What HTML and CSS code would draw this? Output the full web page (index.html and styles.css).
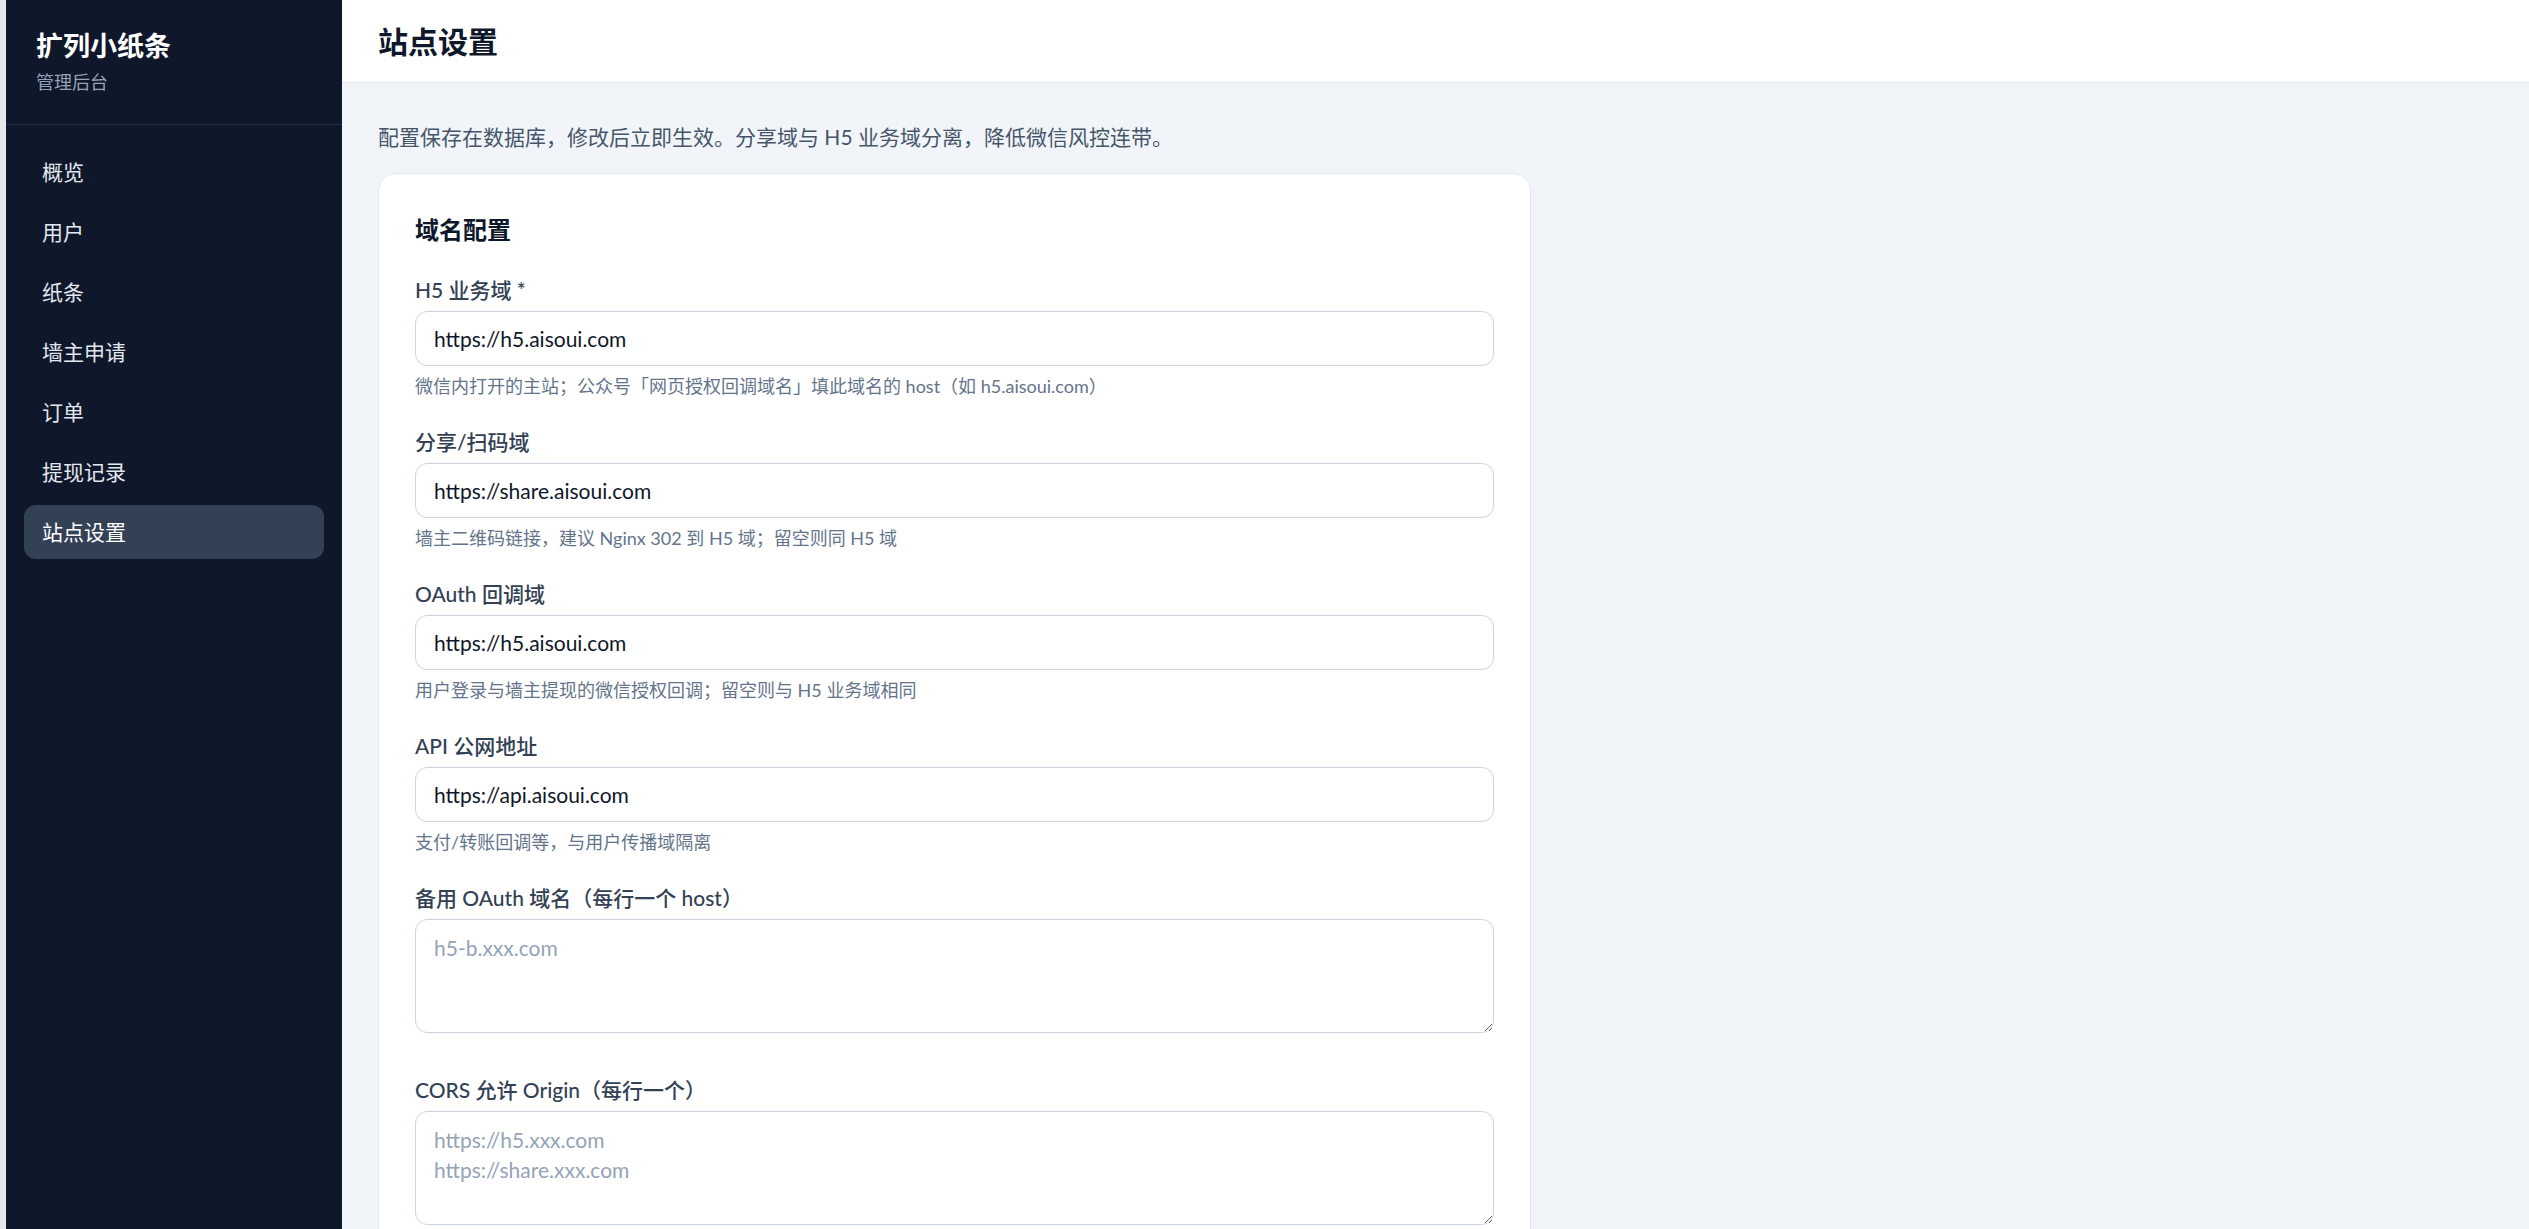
FILE: index.html
```html
<!DOCTYPE html>
<html lang="zh-CN">
<head>
    <meta charset="UTF-8">
    <meta name="viewport" content="width=device-width, initial-scale=1.0">
    <title>站点设置 - 扩列小纸条管理后台</title>
    <link rel="stylesheet" href="styles.css">
</head>
<body>
    <div class="layout">
        <aside class="sidebar">
            <div class="brand">
                <div class="brand-name">扩列小纸条</div>
                <div class="brand-sub">管理后台</div>
            </div>
            <nav class="nav">
                <a href="#" class="nav-item">概览</a>
                <a href="#" class="nav-item">用户</a>
                <a href="#" class="nav-item">纸条</a>
                <a href="#" class="nav-item">墙主申请</a>
                <a href="#" class="nav-item">订单</a>
                <a href="#" class="nav-item">提现记录</a>
                <a href="#" class="nav-item active">站点设置</a>
            </nav>
        </aside>

        <div class="main">
            <header class="topbar">
                <h1>站点设置</h1>
            </header>

            <div class="content">
                <p class="intro">配置保存在数据库，修改后立即生效。分享域与 H5 业务域分离，降低微信风控连带。</p>

                <section class="card">
                    <h2>域名配置</h2>

                    <div class="field">
                        <label for="h5-domain">H5 业务域 *</label>
                        <input id="h5-domain" type="text" value="https://h5.aisoui.com">
                        <div class="hint">微信内打开的主站；公众号「网页授权回调域名」填此域名的 host（如 h5.aisoui.com）</div>
                    </div>

                    <div class="field">
                        <label for="share-domain">分享/扫码域</label>
                        <input id="share-domain" type="text" value="https://share.aisoui.com">
                        <div class="hint">墙主二维码链接，建议 Nginx 302 到 H5 域；留空则同 H5 域</div>
                    </div>

                    <div class="field">
                        <label for="oauth-domain">OAuth 回调域</label>
                        <input id="oauth-domain" type="text" value="https://h5.aisoui.com">
                        <div class="hint">用户登录与墙主提现的微信授权回调；留空则与 H5 业务域相同</div>
                    </div>

                    <div class="field">
                        <label for="api-url">API 公网地址</label>
                        <input id="api-url" type="text" value="https://api.aisoui.com">
                        <div class="hint">支付/转账回调等，与用户传播域隔离</div>
                    </div>

                    <div class="field field-area">
                        <label for="oauth-backup">备用 OAuth 域名（每行一个 host）</label>
                        <textarea id="oauth-backup" rows="3" placeholder="h5-b.xxx.com"></textarea>
                    </div>

                    <div class="field field-area">
                        <label for="cors-origins">CORS 允许 Origin（每行一个）</label>
                        <textarea id="cors-origins" rows="3" placeholder="https://h5.xxx.com&#10;https://share.xxx.com"></textarea>
                    </div>
                </section>
            </div>
        </div>
    </div>
</body>
</html>
```

FILE: styles.css
```css
* {
    box-sizing: border-box;
    margin: 0;
    padding: 0;
}
html, body {
    height: 100%;
}
body {
    font-family: Lato, "Noto Sans CJK SC", sans-serif;
    background-color: #e5e7eb;
    color: #0f172a;
    overflow: hidden;
}
.layout {
    display: flex;
    min-height: 100vh;
    padding-left: 6px;
}

/* 侧边栏 */
.sidebar {
    width: 336px;
    flex-shrink: 0;
    background-color: #0f172a;
    color: #e2e8f0;
}
.brand {
    padding: 28px 30px;
    border-bottom: 1px solid #243045;
}
.brand-name {
    font-size: 27px;
    line-height: 36px;
    font-weight: 700;
    color: #fff;
}
.brand-sub {
    margin-top: 5px;
    font-size: 18px;
    line-height: 27px;
    color: #94a3b8;
}
.nav {
    display: flex;
    flex-direction: column;
    gap: 6px;
    padding: 20px 18px;
}
.nav-item {
    display: block;
    height: 54px;
    padding: 0 18px;
    border-radius: 12px;
    font-size: 21px;
    line-height: 54px;
    color: #e2e8f0;
    text-decoration: none;
}
.nav-item.active {
    background-color: #334155;
    color: #fff;
}

/* 主区域 */
.main {
    flex: 1;
    background-color: #f1f5f9;
}
.topbar {
    height: 83px;
    padding: 0 36px;
    background-color: #fff;
    border-bottom: 1px solid #e2e8f0;
}
.topbar h1 {
    font-size: 30px;
    line-height: 82px;
    font-weight: 700;
    color: #0f172a;
}
.content {
    padding: 38px 36px;
}
.intro {
    margin-bottom: 20px;
    font-size: 21px;
    line-height: 31.5px;
    color: #475569;
}
.card {
    max-width: 1153px;
    padding: 38px 36px;
    background-color: #fff;
    border: 1px solid #e2e8f0;
    border-radius: 18px;
}
.card h2 {
    margin-bottom: 26px;
    font-size: 24px;
    line-height: 36px;
    font-weight: 700;
    color: #0f172a;
}
.field {
    margin-bottom: 25.5px;
}
.field-area {
    margin-bottom: 40.5px;
}
.field label {
    display: block;
    margin-bottom: 6px;
    font-size: 21px;
    line-height: 31.5px;
    font-weight: 500;
    color: #334155;
}
.field input,
.field textarea {
    display: block;
    width: 100%;
    font-family: inherit;
    font-size: 21px;
    color: #0f172a;
    background-color: #fff;
    border: 1px solid #cbd5e1;
    border-radius: 12px;
    outline: none;
}
.field input {
    height: 55px;
    padding: 0 18px;
}
.field textarea {
    height: 114px;
    padding: 13px 18px;
    line-height: 29.5px;
    resize: vertical;
}
.field input::placeholder,
.field textarea::placeholder {
    color: #94a3b8;
}
.hint {
    margin-top: 7px;
    font-size: 18px;
    line-height: 27px;
    color: #64748b;
}
```
